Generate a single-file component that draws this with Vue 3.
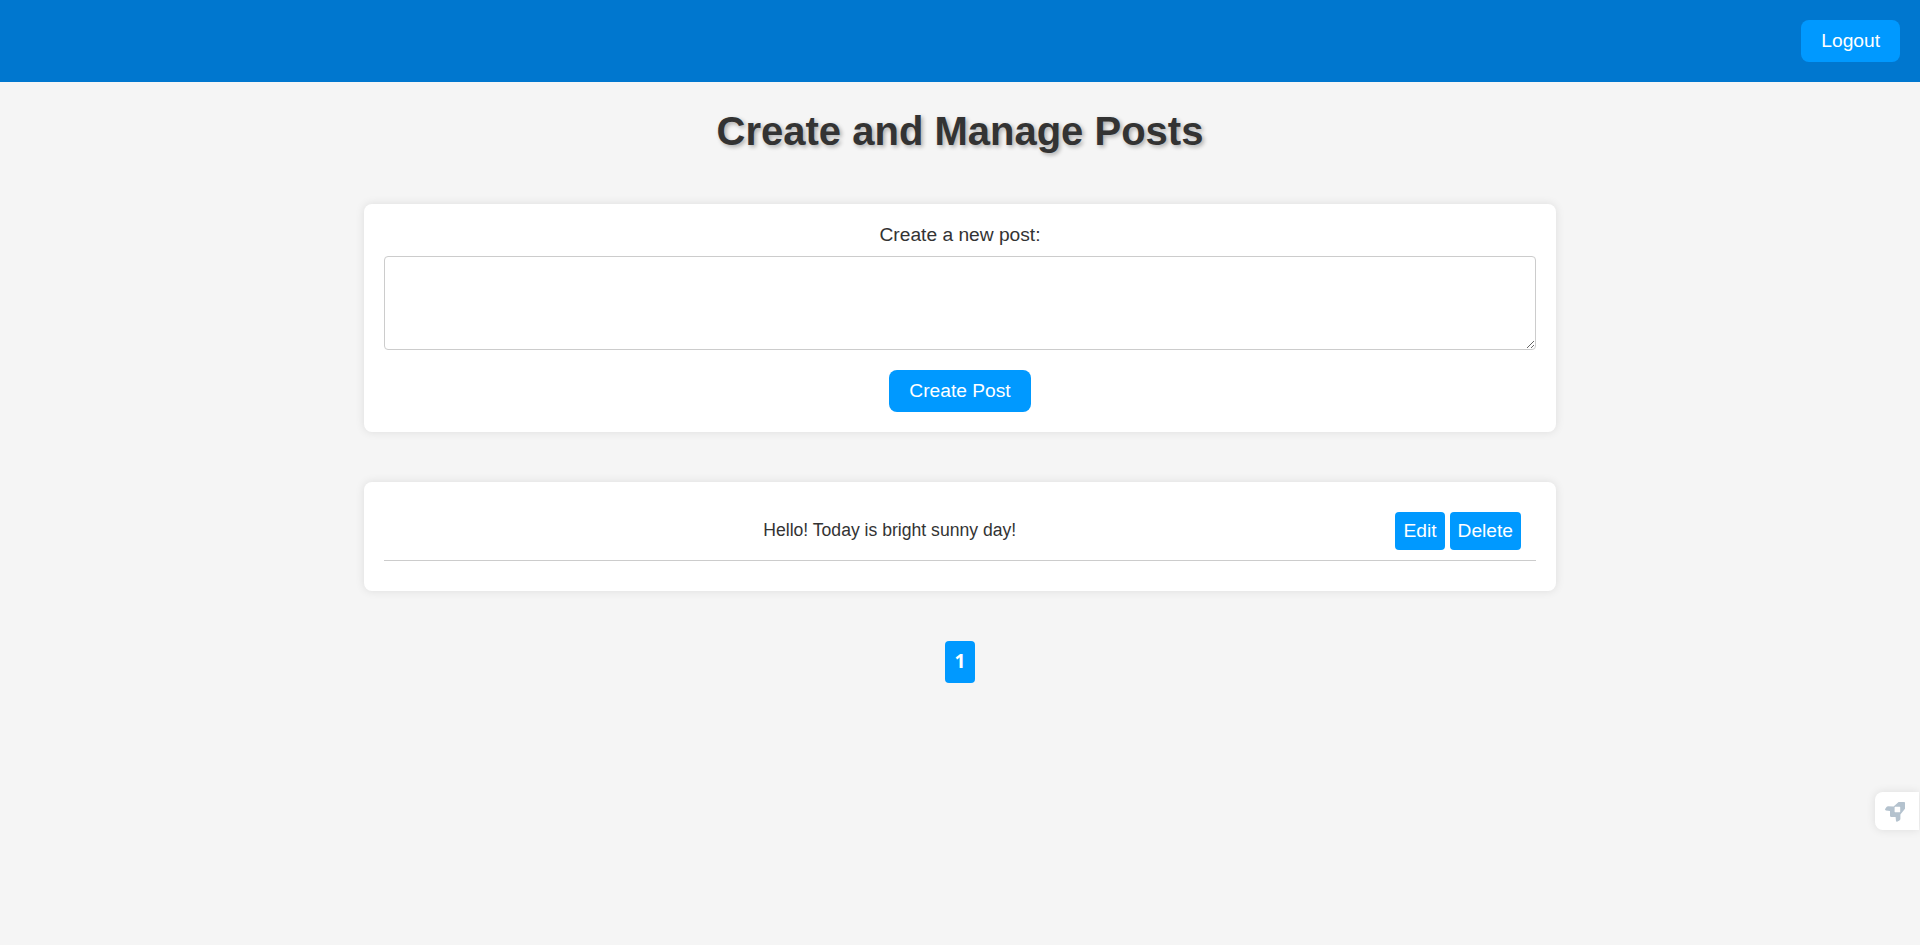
<script setup>
import { ref } from 'vue'

const draft = ref('')
const posts = ref([{ id: 1, text: 'Hello! Today is bright sunny day!' }])
const pages = [1]
</script>

<template>
  <div class="page">
    <header class="topbar">
      <button class="btn" type="button">Logout</button>
    </header>
    <main>
      <h1>Create and Manage Posts</h1>
      <form class="card" @submit.prevent>
        <label for="draft">Create a new post:</label>
        <textarea id="draft" v-model="draft"></textarea>
        <button class="btn" type="submit">Create Post</button>
      </form>
      <section class="card list">
        <div v-for="post in posts" :key="post.id" class="post">
          <p>{{ post.text }}</p>
          <div class="actions">
            <button class="btn small" type="button">Edit</button>
            <button class="btn small" type="button">Delete</button>
          </div>
        </div>
      </section>
      <nav class="pagination">
        <button v-for="n in pages" :key="n" class="page-number" type="button">{{ n }}</button>
      </nav>
    </main>
    <aside class="launcher">
      <svg width="20" height="20" viewBox="0 0 20 20" aria-hidden="true">
        <path fill="#b4c2ce" fill-rule="evenodd" d="M19.2 0H13.6L8.6 4.6L3.2 4.2C2.4 4.2 1.9 4.5 1.5 5L0 7.2Q0 8.3 1 8.5L5 9V14Q5.2 14.8 6.3 15H10.6L11 19Q11.2 20 12.1 19.8L14.4 18.5Q15.4 17.8 15.4 16.8V12.5L20 6.8V.8Q19.9 0 19.2 0ZM10 4.8H14.8L15.2 5.2V9.8L14.8 10.2H10L9.6 9.8V5.2Z"/>
      </svg>
    </aside>
  </div>
</template>

<style>
body {
  margin: 0;
  background: #f5f5f5;
}
</style>

<style scoped>
.page {
  min-height: 945px;
  color: #333;
  font-family: "Liberation Sans", Arial, sans-serif;
  text-align: center;
}
.topbar {
  display: flex;
  justify-content: flex-end;
  padding: 20px;
  background: #0077cf;
}
.btn {
  height: 42px;
  padding: 10px 20px;
  border: 0;
  border-radius: 8px;
  background: #0099ff;
  color: #fff;
  font: 19.2px/22px "Liberation Sans", Arial, sans-serif;
}
main {
  display: flex;
  flex-direction: column;
  align-items: center;
}
h1 {
  margin: 26px 0 50px;
  font-size: 40px;
  line-height: 46px;
  text-shadow: 2px 2px 4px rgba(0, 0, 0, 0.3);
}
.card {
  box-sizing: border-box;
  width: 1192px;
  padding: 20px;
  border-radius: 8px;
  background: #fff;
  box-shadow: 0 0 10px rgba(0, 0, 0, 0.1);
}
form label {
  display: block;
  margin-bottom: 10px;
  font-size: 19.2px;
  line-height: 22px;
}
textarea {
  display: block;
  box-sizing: border-box;
  width: 100%;
  height: 94px;
  margin-bottom: 20px;
  padding: 10px;
  border: 1px solid #ccc;
  border-radius: 4px;
  resize: vertical;
  font: 19.2px/22px "Liberation Sans", Arial, sans-serif;
}
.list {
  height: 109px;
  margin-top: 50px;
}
.post {
  display: flex;
  align-items: center;
  padding: 10px 15px 10px 0;
  border-bottom: 1px solid #ccc;
}
.post p {
  flex: 1;
  margin: 0 0 2px;
  font-size: 17.6px;
  line-height: 20px;
}
.actions {
  display: flex;
  gap: 5px;
}
.small {
  height: 38px;
  padding: 8px;
  border-radius: 4px;
}
.pagination {
  margin-top: 50px;
}
.page-number {
  width: 30px;
  height: 42px;
  padding: 0 0 2px;
  border: 0;
  border-radius: 4px;
  background: #0099ff;
  color: #fff;
  font: bold 19.2px/22px "Open Sans", sans-serif;
}
.launcher {
  position: fixed;
  right: 1px;
  top: 792px;
  box-sizing: border-box;
  width: 44px;
  height: 38px;
  padding: 10px 0 0 10px;
  border-radius: 8px 0 0 8px;
  background: #fff;
  box-shadow: 0 0 10px rgba(0, 0, 0, 0.1);
  text-align: left;
}
.launcher svg {
  display: block;
}
</style>
